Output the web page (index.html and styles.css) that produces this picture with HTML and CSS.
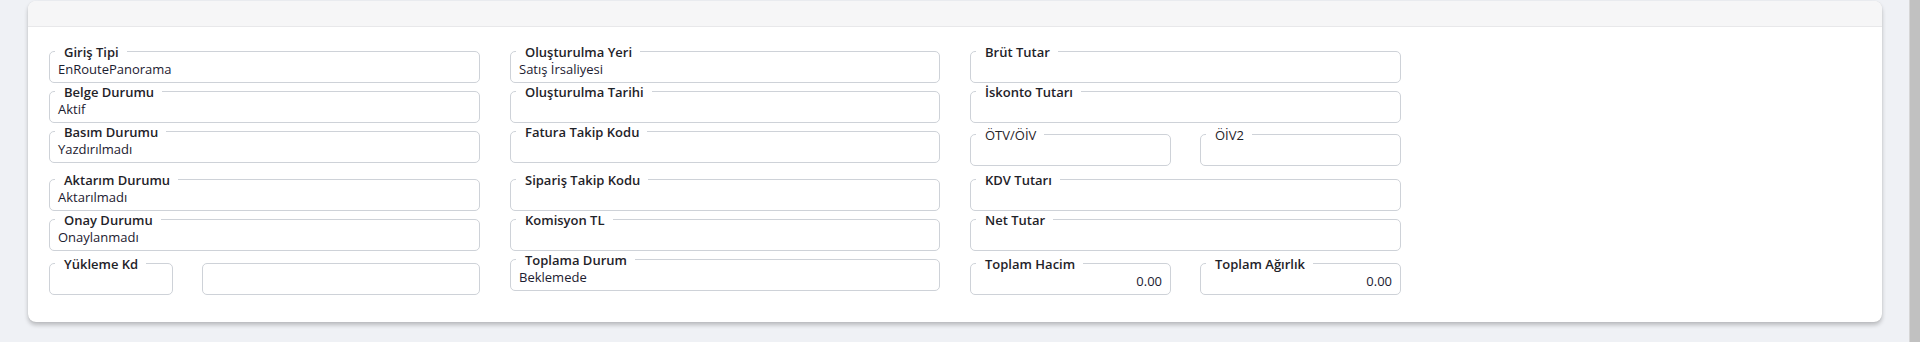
FILE: index.html
```html
<!DOCTYPE html>
<html lang="tr">

<head>
    <meta charset="UTF-8">
    <meta name="viewport" content="width=device-width, initial-scale=1.0">
    <title>Belge Bilgileri</title>
    <link rel="stylesheet" href="styles.css">
</head>

<body>
    <div class="page">
        <!-- Card -->
        <div class="card">
            <div class="card-header"></div>
            <div class="card-body">

                <!-- Column 1 -->
                <div class="col">
                    <div class="field">
                        <span class="label">Giriş Tipi</span>
                        <div class="value">EnRoutePanorama</div>
                    </div>
                    <div class="field">
                        <span class="label">Belge Durumu</span>
                        <div class="value">Aktif</div>
                    </div>
                    <div class="field">
                        <span class="label">Basım Durumu</span>
                        <div class="value">Yazdırılmadı</div>
                    </div>
                    <div class="field gap-lg">
                        <span class="label">Aktarım Durumu</span>
                        <div class="value">Aktarılmadı</div>
                    </div>
                    <div class="field">
                        <span class="label">Onay Durumu</span>
                        <div class="value">Onaylanmadı</div>
                    </div>
                    <div class="split split-kd gap-md">
                        <div class="field">
                            <span class="label">Yükleme Kd</span>
                            <div class="value"></div>
                        </div>
                        <div class="field">
                            <div class="value"></div>
                        </div>
                    </div>
                </div>

                <!-- Column 2 -->
                <div class="col">
                    <div class="field">
                        <span class="label">Oluşturulma Yeri</span>
                        <div class="value">Satış İrsaliyesi</div>
                    </div>
                    <div class="field">
                        <span class="label">Oluşturulma Tarihi</span>
                        <div class="value"></div>
                    </div>
                    <div class="field">
                        <span class="label">Fatura Takip Kodu</span>
                        <div class="value"></div>
                    </div>
                    <div class="field gap-lg">
                        <span class="label">Sipariş Takip Kodu</span>
                        <div class="value"></div>
                    </div>
                    <div class="field">
                        <span class="label">Komisyon TL</span>
                        <div class="value"></div>
                    </div>
                    <div class="field">
                        <span class="label">Toplama Durum</span>
                        <div class="value">Beklemede</div>
                    </div>
                </div>

                <!-- Column 3 -->
                <div class="col">
                    <div class="field">
                        <span class="label">Brüt Tutar</span>
                        <div class="value"></div>
                    </div>
                    <div class="field">
                        <span class="label">İskonto Tutarı</span>
                        <div class="value"></div>
                    </div>
                    <div class="split split-half gap-sm">
                        <div class="field">
                            <span class="label light">ÖTV/ÖİV</span>
                            <div class="value"></div>
                        </div>
                        <div class="field">
                            <span class="label light">ÖİV2</span>
                            <div class="value"></div>
                        </div>
                    </div>
                    <div class="field gap-kdv">
                        <span class="label">KDV Tutarı</span>
                        <div class="value"></div>
                    </div>
                    <div class="field">
                        <span class="label">Net Tutar</span>
                        <div class="value"></div>
                    </div>
                    <div class="split split-half gap-md">
                        <div class="field">
                            <span class="label">Toplam Hacim</span>
                            <div class="value num">0.00</div>
                        </div>
                        <div class="field">
                            <span class="label">Toplam Ağırlık</span>
                            <div class="value num">0.00</div>
                        </div>
                    </div>
                </div>

            </div>
        </div>
    </div>

    <!-- Scrollbar -->
    <div class="scrollbar"></div>
</body>

</html>
```

FILE: styles.css
```css
body {
    font-family: "Open Sans", "Noto Sans", sans-serif;
    margin: 0;
    padding: 0;
    background-color: #eff1f5;
    color: #212529;
    display: flex;
    height: 342px;
    overflow: hidden;
}

.page {
    flex: 1;
    padding: 1px 27px 0 28px;
}

.scrollbar {
    width: 10px;
    background-color: #c1c1c1;
    border-left: 1px solid #d6d6d6;
}
/* Card */

.card {
    background-color: #ffffff;
    border-radius: 8px;
    height: 321px;
    box-shadow: 0 0 1px rgba(0, 0, 0, 0.15), 0 3px 4px rgba(0, 0, 0, 0.22);
}

.card-header {
    height: 25px;
    background-color: #f6f6f7;
    border-bottom: 1px solid #e8e8ea;
    border-radius: 8px 8px 0 0;
}

.card-body {
    display: grid;
    grid-template-columns: 431px 430px 431px;
    column-gap: 30px;
    padding: 24px 0 0 21px;
}

.col {
    display: flex;
    flex-direction: column;
    gap: 8px;
}

.gap-sm {
    margin-top: 3px;
}

.gap-lg {
    margin-top: 8px;
}

.gap-md {
    margin-top: 4px;
}

.gap-kdv {
    margin-top: 5px;
}
/* Fields */

.field {
    position: relative;
    box-sizing: border-box;
    height: 32px;
    border: 1px solid #ced2d8;
    border-radius: 5px;
}

.field .label {
    position: absolute;
    top: -7px;
    left: 5px;
    padding: 0 8px 0 9px;
    background-color: #ffffff;
    font-size: 13px;
    font-weight: 600;
    line-height: 14px;
    color: #1f2329;
    white-space: nowrap;
}

.field .label.light {
    font-weight: 400;
}

.field .value {
    padding: 9px 8px 0 8px;
    font-size: 13px;
    line-height: 16px;
    color: #1c2030;
}

.field .value.num {
    text-align: right;
}

.split {
    display: flex;
    justify-content: space-between;
}

.split-kd .field:first-child {
    width: 124px;
}

.split-kd .field:last-child {
    width: 278px;
}

.split-half .field {
    width: 201px;
}
```
